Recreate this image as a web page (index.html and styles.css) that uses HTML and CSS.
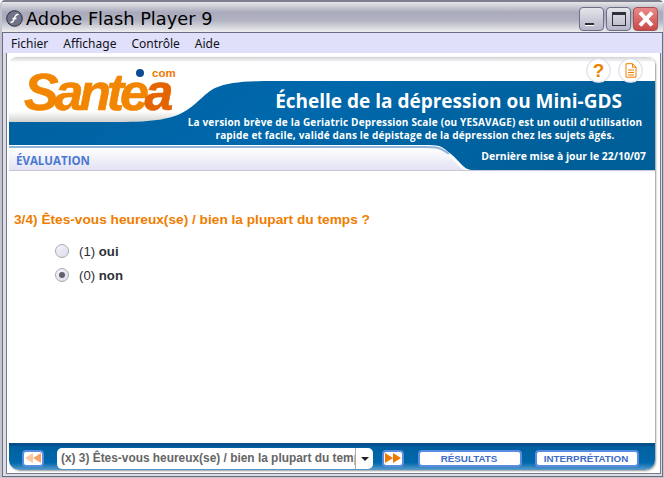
FILE: index.html
```html
<!DOCTYPE html>
<html lang="fr">
<head>
  <meta charset="UTF-8" />
  <title>Adobe Flash Player 9</title>
  <link rel="stylesheet" href="styles.css">
</head>
<body>
  <div class="window">
    <div class="titlebar">
      <svg class="app-icon" width="17" height="17" viewBox="0 0 17 17">
        <circle cx="8.5" cy="8.5" r="7.8" fill="#6f7488" stroke="#2e3040" stroke-width="1"/>
        <path d="M4.500 12.500c3 0 3.200-2 4-4.500s1.500-3.800 4-3.800M6.500 8.500h4" fill="none" stroke="#fff" stroke-width="1.500"/>
      </svg>
      <span class="title-text">Adobe Flash Player 9</span>
      <div class="win-buttons">
        <div class="win-btn"><span class="min-mark"></span></div>
        <div class="win-btn"><span class="max-mark"></span></div>
        <div class="win-btn win-close">
          <svg width="20" height="20" viewBox="0 0 20 20"><path d="M4 3.500l12 13M16 3.500l-12 13" stroke="#fff" stroke-width="4"/></svg>
        </div>
      </div>
    </div>

    <div class="client">
      <div class="menu">
        <span>Fichier</span>
        <span>Affichage</span>
        <span>Contrôle</span>
        <span>Aide</span>
      </div>

      <div class="stage">
        <div class="stage-inner">
          <div class="panel">
            <header class="banner">
              <svg class="banner-bg" width="646" height="113" viewBox="0 0 646 113">
                <defs>
                  <linearGradient id="topShade" x1="0" y1="0" x2="0" y2="1">
                    <stop offset="0" stop-color="#d4d4d8"/>
                    <stop offset="0.08" stop-color="#ffffff"/>
                    <stop offset="0.8" stop-color="#ffffff"/>
                    <stop offset="1" stop-color="#c4c4c0"/>
                  </linearGradient>
                  <linearGradient id="blue" x1="0" y1="0" x2="1" y2="0.2">
                    <stop offset="0" stop-color="#00609f"/>
                    <stop offset="0.5" stop-color="#0068ac"/>
                    <stop offset="1" stop-color="#005f98"/>
                  </linearGradient>
                  <linearGradient id="strip" x1="0" y1="0" x2="0" y2="1">
                    <stop offset="0" stop-color="#ffffff"/>
                    <stop offset="1" stop-color="#e2e2f4"/>
                  </linearGradient>
                </defs>
                <rect width="646" height="68" fill="url(#topShade)"/>
                <path d="M0 65h110c35 0 55-3 68-12 12-8 18-17 28-22 14-6 30-7 58-7h382v89H465c-6 0-9-2-12-5-4-4-7-8-11-11-4-3-8-7-12-8-3-1-8-1-15-1H0z" fill="url(#blue)"/>
                <path d="M0 91h414c7 0 12 0 15 1 4 1 8 5 12 8 4 3 7 7 11 11 3 2 7 2 13 2H0z" fill="url(#strip)"/>
                <path d="M0 90h414c7 0 12 0 15 1 4 1 7 3 11 6" fill="none" stroke="#8fb4d6" stroke-width="2"/>
              </svg>

              <div class="logo-name">Sante<em>a</em></div>
              <span class="logo-dot"></span>
              <span class="logo-com">com</span>

              <div class="round-btns">
                <div class="round-btn help">?</div>
                <div class="round-btn">
                  <svg width="12" height="15" viewBox="0 0 12 15"><path d="M1 .7h6.500L11 4.200v10H1zM7.500.7v3.500H11M3 7h6M3 9.500h6M3 12h6" fill="#fff" stroke="#f08000" stroke-width="1"/></svg>
                </div>
              </div>

              <div class="banner-copy">
                <h1>Échelle de la dépression ou Mini-GDS</h1>
                <p>La version brève de la Geriatric Depression Scale (ou YESAVAGE) est un outil d'utilisation<br>rapide et facile, validé dans le dépistage de la dépression chez les sujets âgés.</p>
              </div>

              <div class="banner-foot">
                <span class="section">ÉVALUATION</span>
                <span class="updated">Dernière mise à jour le 22/10/07</span>
              </div>
            </header>

            <main class="content">
              <h2>3/4) Êtes-vous heureux(se) / bien la plupart du temps ?</h2>
              <div class="answer"><span class="radio"></span><span>(1) <b>oui</b></span></div>
              <div class="answer"><span class="radio checked"></span><span>(0) <b>non</b></span></div>
            </main>

            <footer class="toolbar">
              <div class="nav-btn">
                <svg width="16" height="10" viewBox="0 0 16 10"><path d="M8 0v10L0 5z" fill="#f8c8a0"/><path d="M16 0v10L8 5z" fill="#f4a468"/></svg>
              </div>
              <div class="select">
                <span class="select-text">(x) 3) Êtes-vous heureux(se) / bien la plupart du temps ?</span>
                <span class="select-arrow"></span>
              </div>
              <div class="nav-btn next">
                <svg width="16" height="10" viewBox="0 0 16 10"><path d="M0 0v10l8-5zM8 0v10l8-5z" fill="#f07800"/></svg>
              </div>
              <div class="text-btn results">RÉSULTATS</div>
              <div class="text-btn interp">INTERPRÉTATION</div>
            </footer>
          </div>
        </div>
      </div>
    </div>
  </div>
</body>
</html>
```

FILE: styles.css
```css
* { box-sizing: border-box; }
html, body {
  margin: 0;
  padding: 0;
}
body {
  width: 664px;
  height: 478px;
  overflow: hidden;
  background: #fff;
}
.window {
  width: 664px;
  height: 478px;
  display: flex;
  flex-direction: column;
  border: 2px solid #c4c4d0;
  border-top-color: #7c7e90;
  border-right-width: 1px;
  border-bottom-width: 1px;
  border-radius: 5px 5px 0 0;
  background: #d8d8e0;
}
.titlebar {
  height: 30px;
  flex: none;
  display: flex;
  align-items: center;
  padding: 2px 5px 0 4px;
  background: linear-gradient(#e6e6e8 0%, #a9aabc 35%, #b0b1c0 60%, #eeeef0 100%);
}
.app-icon {
  margin-right: 3px;
}
.title-text {
  font-family: "DejaVu Sans", sans-serif;
  font-size: 17.8px;
  color: #000;
  white-space: nowrap;
}
.win-buttons {
  margin-left: auto;
  display: flex;
  gap: 2px;
  margin-top: 2px;
}
.win-btn {
  width: 25px;
  height: 24px;
  border: 1px solid #6c6e88;
  border-radius: 4px;
  background: linear-gradient(#e4e4ea, #b4b6c8);
  display: flex;
  align-items: center;
  justify-content: center;
}
.min-mark {
  width: 9px;
  height: 3px;
  background: #30303c;
  border-bottom: 1px solid #fff;
  margin: 10px 5px 0 0;
}
.max-mark {
  width: 14px;
  height: 14px;
  border: 1px solid #30303c;
  border-top-width: 3px;
}
.win-close {
  background: linear-gradient(#e88a88, #c84a48);
  border-color: #a05058;
}
.client {
  flex: 1;
  display: flex;
  flex-direction: column;
  min-height: 0;
  border: 1px solid #6a6c80;
  background: #dcdce4;
}
.menu {
  height: 20px;
  flex: none;
  display: flex;
  align-items: center;
  padding-left: 8px;
  background: #e0e0fa;
  font-family: "Noto Sans", sans-serif;
  font-size: 12px;
  color: #101018;
  gap: 15px;
}
.stage {
  flex: 1;
  min-height: 0;
  display: flex;
  padding: 0 1px 2px 3px;
}
.stage-inner {
  flex: 1;
  min-width: 0;
  padding: 4px 4px 3px 2px;
  background: #fff;
  border: 1px solid #77798c;
  border-top: 0;
}
.panel {
  width: 646px;
  height: 100%;
  display: flex;
  flex-direction: column;
  box-shadow: 1px 1px 2px #999;
  border-radius: 8px 8px 10px 10px;
  background: #fff;
}
.banner {
  height: 113px;
  position: relative;
  border-radius: 8px 8px 0 0;
  overflow: hidden;
  flex: none;
}
.banner-bg {
  position: absolute;
  left: 0;
  top: 0;
}
.logo-name {
  position: absolute;
  left: 15px;
  top: 21px;
  font-family: "Liberation Sans", sans-serif;
  font-size: 52px;
  line-height: 28px;
  font-weight: bold;
  font-style: italic;
  color: #f28600;
  letter-spacing: -4.2px;
  -webkit-text-stroke: 0.6px currentColor;
}
.logo-name em {
  color: #e46400;
}
.logo-dot {
  position: absolute;
  left: 127px;
  top: 12px;
  width: 8px;
  height: 8px;
  border-radius: 50%;
  background: #0c4a94;
}
.logo-com {
  position: absolute;
  left: 143px;
  top: 11px;
  font-family: "Liberation Sans", sans-serif;
  font-size: 11.5px;
  line-height: 10px;
  font-weight: bold;
  color: #f07800;
}
.round-btns {
  position: absolute;
  right: 12px;
  top: 1px;
  display: flex;
  gap: 7px;
}
.round-btn {
  width: 25px;
  height: 25px;
  border-radius: 50%;
  background: radial-gradient(circle, #fff 60%, #dcdcea 100%);
  border: 1px solid #d8dce8;
  display: flex;
  align-items: center;
  justify-content: center;
}
.help {
  font-family: "Liberation Sans", sans-serif;
  font-size: 19px;
  font-weight: bold;
  color: #f08000;
}
.banner-copy {
  position: absolute;
  left: 170px;
  top: 32px;
  width: 472px;
  color: #fff;
  font-family: "Open Sans", sans-serif;
  text-align: center;
}
.banner-copy h1 {
  margin: 0;
  font-size: 19px;
  line-height: 24px;
  font-weight: 700;
  text-align: right;
  padding-right: 29px;
  white-space: nowrap;
}
.banner-copy p {
  margin: 3px 0 0;
  font-size: 10px;
  letter-spacing: 0.17px;
  line-height: 13px;
  font-weight: 700;
  white-space: nowrap;
}
.banner-foot {
  position: absolute;
  left: 0;
  right: 0;
  bottom: 0;
  height: 22px;
  display: flex;
  align-items: center;
  justify-content: space-between;
  padding: 3px 9px 0 7px;
  font-family: "Open Sans", sans-serif;
  font-weight: 700;
}
.section {
  color: #4a78d0;
  font-size: 11.5px;
}
.updated {
  color: #fff;
  font-size: 10.4px;
  margin-top: -9px;
}
.content {
  flex: 1;
  border-top: 1px solid #c8c8d4;
  background: #fff;
  font-family: "Liberation Sans", sans-serif;
}
.content h2 {
  margin: 41px 0 12px 5px;
  font-size: 13.7px;
  line-height: 15px;
  font-weight: bold;
  color: #f07d00;
}
.answer {
  display: flex;
  align-items: center;
  height: 24px;
  padding-left: 46px;
  font-size: 13.2px;
  color: #303038;
  gap: 10px;
}
.radio {
  width: 14px;
  height: 14px;
  border-radius: 50%;
  border: 1px solid #a8a8b4;
  background: linear-gradient(135deg, #f4f4fc, #dcdcec);
  display: flex;
  align-items: center;
  justify-content: center;
}
.radio.checked::after {
  content: "";
  width: 6px;
  height: 6px;
  border-radius: 50%;
  background: #606068;
}
.toolbar {
  height: 27px;
  flex: none;
  display: flex;
  align-items: center;
  padding: 0 0 0 13px;
  border-radius: 0 0 10px 10px;
  border-top: 3px solid #00508c;
  background: linear-gradient(#00609f, #0068ac 70%, #5a9ccc);
  font-family: "Liberation Sans", sans-serif;
}
.nav-btn {
  width: 22px;
  height: 17px;
  border: 2px solid #5a8ce0;
  border-radius: 4px;
  background: #fff;
  display: flex;
  align-items: center;
  justify-content: center;
}
.select {
  width: 316px;
  height: 21px;
  margin-left: 13px;
  display: flex;
  border-radius: 5px;
  background: #fff;
  overflow: hidden;
  font-size: 11.9px;
  color: #666;
}
.select-text {
  flex: 1;
  padding-left: 4px;
  line-height: 21px;
  font-weight: bold;
  white-space: nowrap;
  overflow: hidden;
}
.select-arrow {
  width: 18px;
  flex: none;
  border-left: 1px solid #aaa;
  position: relative;
}
.select-arrow::after {
  content: "";
  position: absolute;
  left: 5px;
  top: 9px;
  border: 4px solid transparent;
  border-top: 4px solid #222;
}
.next {
  margin-left: 9px;
}
.text-btn {
  height: 17px;
  width: 104px;
  border: 2px solid #5a8ce0;
  border-radius: 4px;
  padding-right: 2px;
  background: #fff;
  color: #3e6cc8;
  font-size: 9.8px;
  font-weight: bold;
  display: flex;
  align-items: center;
  justify-content: center;
}
.results {
  margin-left: 14px;
}
.interp {
  margin-left: 13px;
}
```
